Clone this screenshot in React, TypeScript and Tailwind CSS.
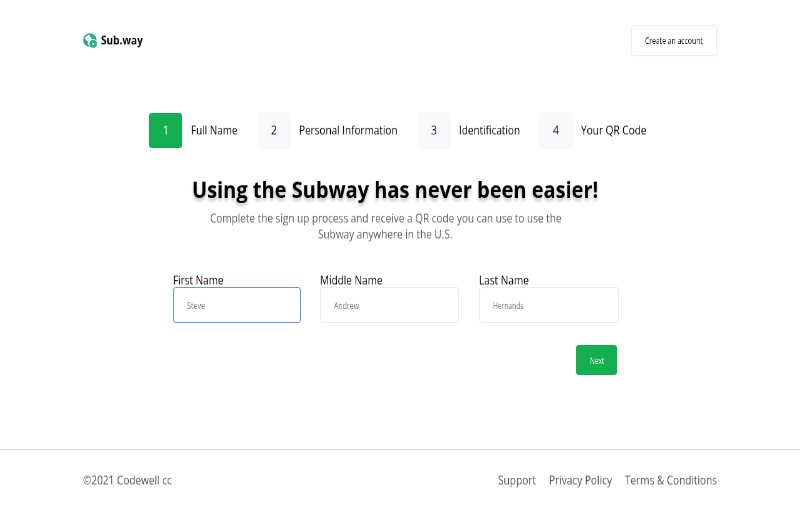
import { useLayoutEffect, useRef } from "react";

// Condenses one line of text so that it fills the width of its box,
// with the line height reduced by a fixed factor.
function Fit({ children, className, small = false }: { children: string; className: string; small?: boolean }) {
  const box = useRef<HTMLSpanElement>(null);
  const text = useRef<HTMLSpanElement>(null);
  useLayoutEffect(() => {
    const fit = () => {
      if (!box.current || !text.current) return;
      const ratio = box.current.getBoundingClientRect().width / text.current.offsetWidth;
      text.current.style.transform = `scale(${ratio}, 0.74)`;
    };
    fit();
    document.fonts.ready.then(fit);
  }, [children]);
  return (
    <span ref={box} className={`flex h-[16px] shrink-0 items-center ${small ? "pt-[1.2px] text-[12px] leading-[16px] font-medium" : "pb-[1.4px]"} ${className}`}>
      <span ref={text} className="block shrink-0 origin-left whitespace-nowrap will-change-transform">
        {children}
      </span>
    </span>
  );
}

function Logo() {
  return (
    <svg className="h-[15px] w-[14px] shrink-0" viewBox="0 0 14 15" fill="none" preserveAspectRatio="none">
      <circle cx="6.8" cy="7" r="6" stroke="#22b091" strokeWidth="1.5" />
      <path d="M1 5.400 3.600 7.200 5 9 4.800 13C2.500 12.200 .8 10.200 .8 7ZM7.200 1.200 6.600 3.300 8.400 4.500 8.200 6.200 10 6.400 12.700 5.800 10.500 2Z" fill="#22b091" />
      <circle cx="10.200" cy="10.900" r="4.500" fill="white" />
      <circle cx="10.200" cy="10.900" r="3.800" fill="#22b091" />
      <path d="M8.900 9.900 11.500 9.900 10.200 12.500Z" fill="white" />
    </svg>
  );
}

const steps = [
  { n: "1", label: "Full Name", item: "ml-[149px]", tile: "h-[35px] w-[33px] rounded-[3px] bg-[#12ae50] text-white", text: "ml-[9px] w-[46.5px]" },
  { n: "2", label: "Personal Information", item: "ml-[19px]", tile: "h-[37px] w-[34px] rounded-[5px] bg-[#f9f9fc]", text: "ml-[8px] w-[98.5px]" },
  { n: "3", label: "Identification", item: "ml-[19.5px]", tile: "h-[37px] w-[34px] rounded-[5px] bg-[#f9f9fc]", text: "ml-[8px] w-[61px]" },
  { n: "4", label: "Your QR Code", item: "ml-[19px]", tile: "h-[37px] w-[34px] rounded-[5px] bg-[#f9f9fc]", text: "ml-[8px] w-[65.5px]" },
];

const fields = [
  { label: "First Name", value: "Steve", width: "w-[128px]", labelWidth: "w-[50.5px]", valueWidth: "w-[18px]", border: "border-[#6f91f5]" },
  { label: "Middle Name", value: "Andrew", width: "ml-[19px] w-[139px]", labelWidth: "ml-[0.4px] w-[62.5px]", valueWidth: "w-[25px]", border: "border-[#ebebf0]" },
  { label: "Last Name", value: "Hernands", width: "ml-[20px] w-[140px]", labelWidth: "w-[49.500px]", valueWidth: "w-[30.5px]", border: "border-[#ebebf0]" },
];

export default function App() {
  return (
    <div className="flex h-[510px] w-[800px] flex-col overflow-hidden bg-white font-['Open_Sans',sans-serif] text-[16px] leading-[22px] text-black">
      <header className="flex h-[81px] shrink-0 items-center justify-between px-[83px]">
        <div className="flex items-center">
          <Logo />
          <Fit className="ml-[4px] w-[41.5px] font-bold">Sub.way</Fit>
        </div>
        <button className="flex h-[31px] w-[86px] items-center justify-center rounded-[3px] border border-[#ededf2] shadow-[0_0_2px_#eeeef3]">
          <Fit small className="w-[58px]">Create an account</Fit>
        </button>
      </header>

      <main className="flex h-[368px] shrink-0 flex-col">
        <ol className="mt-[31px] flex h-[37px] items-center">
          {steps.map((s) => (
            <li key={s.n} className={`flex items-center ${s.item}`}>
              <span className={`flex items-center justify-center ${s.tile}`}>
                <Fit className="w-[5.8px]">{s.n}</Fit>
              </span>
              <Fit className={s.text}>{s.label}</Fit>
            </li>
          ))}
        </ol>

        <h1 className="mt-[33px] ml-[191.6px] text-[31px] leading-[42px] font-bold [text-shadow:0_4px_4px_rgba(0,0,0,0.25)]">
          <Fit className="w-[406.5px]">Using the Subway has never been easier!</Fit>
        </h1>
        <p className="mt-[12.5px] flex w-[771px] flex-col items-center text-[#5a5a5a]">
          <Fit className="w-[351.5px]">Complete the sign up process and receive a QR code you can use to use the</Fit>
          <Fit className="w-[134.5px]">Subway anywhere in the U.S.</Fit>
        </p>

        <form className="mt-[30.5px] ml-[173px] flex">
          {fields.map((f) => (
            <label key={f.label} className={`flex flex-col ${f.width}`}>
              <Fit className={f.labelWidth}>{f.label}</Fit>
              <span className={`-mt-[2px] flex h-[36px] items-center rounded-[3px] border pl-[12.7px] text-[#757575] ${f.border}`}>
                <Fit small className={f.valueWidth}>{f.value}</Fit>
              </span>
            </label>
          ))}
        </form>
        <button className="mt-[22px] ml-[576px] flex h-[30px] w-[41px] items-center justify-center rounded-[3px] bg-[#12ae50] text-white">
          <Fit small className="w-[14px]">Next</Fit>
        </button>
      </main>

      <footer className="flex h-[61px] shrink-0 items-center justify-between border-t border-[#dedede] px-[83px] pt-px text-[#505050]">
        <Fit className="w-[88.5px]">©2021 Codewell cc</Fit>
        <nav className="flex gap-[13px]">
          <Fit className="w-[38px]">Support</Fit>
          <Fit className="w-[63px]">Privacy Policy</Fit>
          <Fit className="w-[92px]">Terms &amp; Conditions</Fit>
        </nav>
      </footer>
    </div>
  );
}
